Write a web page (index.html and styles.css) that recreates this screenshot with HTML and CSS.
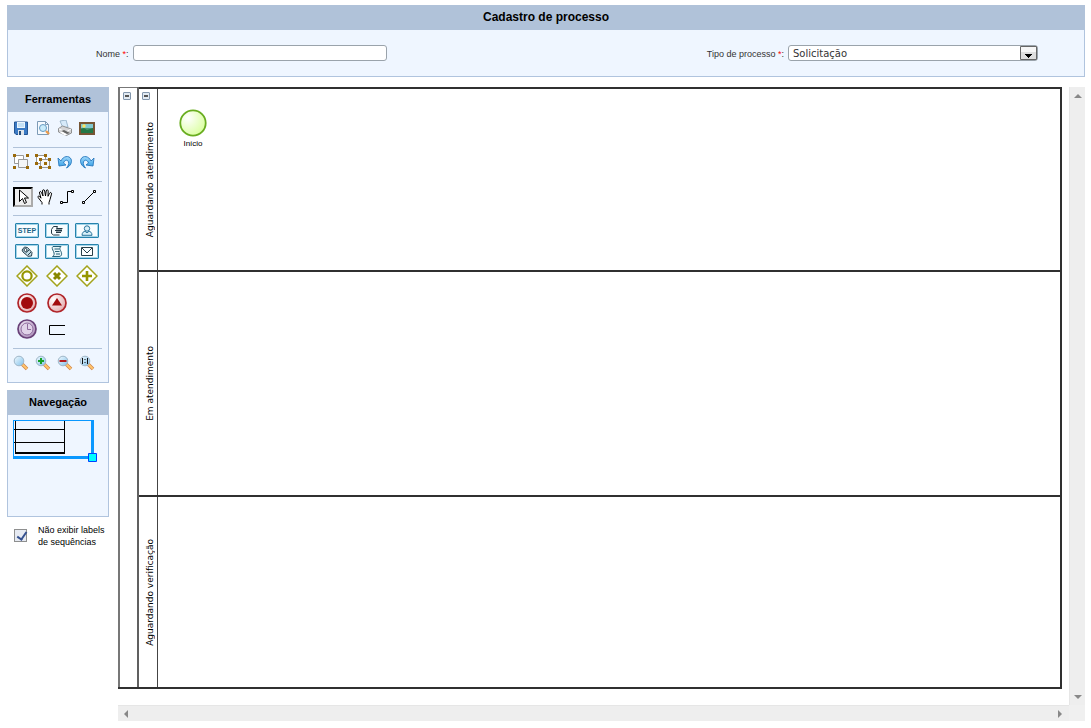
FILE: index.html
```html
<!DOCTYPE html>
<html lang="pt-BR">
<head>
<meta charset="utf-8">
<title>Cadastro de processo</title>
<link rel="stylesheet" href="styles.css">
</head>
<body>
<svg class="defs" aria-hidden="true">
  <defs>
    <linearGradient id="glass" x1="0" y1="0" x2="1" y2="1"><stop offset="0" stop-color="#f4fbff"/><stop offset="1" stop-color="#7fc0ea"/></linearGradient>
    <linearGradient id="arrow" x1="0" y1="0" x2="0" y2="1"><stop offset="0" stop-color="#9fd8fb"/><stop offset="1" stop-color="#2a9ae4"/></linearGradient>
    <radialGradient id="green" cx=".3" cy=".3" r=".8"><stop offset="0" stop-color="#fff"/><stop offset="1" stop-color="#d9ff9c"/></radialGradient>
    <radialGradient id="red" cx=".3" cy=".3" r=".8"><stop offset="0" stop-color="#fff"/><stop offset="1" stop-color="#e2a9ac"/></radialGradient>
    <radialGradient id="purple" cx=".35" cy=".3" r=".8"><stop offset="0" stop-color="#efe6f4"/><stop offset="1" stop-color="#a98bb8"/></radialGradient>
    <symbol id="lens" viewBox="0 0 16 16">
      <path d="M9 9l5 5" stroke="#d0854a" stroke-width="3.6"/><path d="M9.500 9.500l4.300 4.300" stroke="#ffc56b" stroke-width="2"/>
      <circle cx="6" cy="6" r="4.800" fill="url(#glass)" stroke="#9fb6c8"/>
    </symbol>
  </defs>
</svg>

<section class="panel">
  <h1 class="panel-title page-title">Cadastro de processo</h1>
  <form class="form">
    <div class="field">
      <label for="nome">Nome <span class="required">*</span>:</label>
      <input class="control" id="nome" type="text">
    </div>
    <div class="field">
      <label for="tipo">Tipo de processo <span class="required">*</span>:</label>
      <span class="select-wrap">
        <select class="control select" id="tipo"><option>Solicitação</option></select>
        <svg class="select-arrow" viewBox="0 0 17 14" aria-hidden="true"><path d="M.5.5h16v13H.5z" fill="#dedede" stroke="#666"/><path d="M1 1h15v5H1z" fill="#f6f6f6"/><path d="M5 8h7v1h-1v1h-1v1H9v1H8v-1H7v-1H6V9H5z" fill="#000"/></svg>
      </span>
    </div>
  </form>
</section>

<main class="workspace">
  <aside class="sidebar">
    <section class="panel">
      <h2 class="panel-title">Ferramentas</h2>
      <div class="tools">
        <div class="row row-file">
          <button class="tool" aria-label="Salvar"><svg viewBox="0 0 16 16"><path d="M1.500 2h13v12.500H3L1.500 13z" fill="#3b7ac4" stroke="#245593"/><path d="M4 2h8v6H4z" fill="#eaf5fd"/><path d="M5 10h6v5H5z" fill="#dfe5ea"/><path d="M6 11h2v4H6z" fill="#264e7d"/><path d="M5 4h6M5 6h6" stroke="#9ecbed"/></svg></button>
          <button class="tool" aria-label="Visualizar impressão"><svg viewBox="0 0 16 16"><path d="M2.500 1.500h8l3 3v10h-11z" fill="#f5faff" stroke="#7d9bb6"/><path d="M10.500 1.500v3h3" fill="none" stroke="#7d9bb6"/><path d="M11 11l3 3" stroke="#e99a4c" stroke-width="2.4"/><circle cx="8" cy="8" r="3.500" fill="#c9ecfb" stroke="#669bc2"/></svg></button>
          <button class="tool" aria-label="Imprimir"><svg viewBox="0 0 16 16"><path d="M3 1l6-1 2 7-5 1z" fill="#d7eafa" stroke="#8caac2" stroke-width=".8"/><path d="M1.500 8.500l4-2.500 9 3v4l-5 2.500-8-3.500z" fill="#d5d5d7" stroke="#888" stroke-width=".9"/><path d="M2 9l7 3 5-3" fill="none" stroke="#fff"/><path d="M4 11l6 3 3-1-6-3z" fill="#666"/><path d="M3 12.500l5 3 2-1-5-3z" fill="#fff"/></svg></button>
          <button class="tool" aria-label="Imagem"><svg viewBox="0 0 16 16"><path d="M1 3h14v11H1z" fill="#4d9476" stroke="#765534" stroke-width="2"/><path d="M2 4h12v4H2z" fill="#81c8cf"/><path d="M2 9l3-1 3 2 6-2v5H2z" fill="#237746"/><circle cx="5" cy="6" r="1.700" fill="#ffe55c"/></svg></button>
        </div>
        <div class="row row-edit">
          <button class="tool" aria-label="Agrupar"><svg viewBox="0 0 16 16"><path d="M1.500 1.500h9v8h-9z" fill="#fff" stroke="#999"/><path d="M5.500 5.500h9v8h-9z" fill="#f4f6f8" stroke="#999"/><path d="M0 0h3v3H0zM13 0h3v3h-3zM0 12h3v3H0zM13 12h3v3h-3z" fill="#9b6a0a"/></svg></button>
          <button class="tool" aria-label="Desagrupar"><svg viewBox="0 0 16 16"><path d="M1.500 1.500h9v8h-9z" fill="#fff" stroke="#999"/><path d="M5.500 5.500h9v8h-9z" fill="#f4f6f8" stroke="#999"/><path d="M0 0h3v3H0zM9 0h3v3H9zM0 8h3v3H0zM9 8h3v3H9zM4 4h3v3H4zM13 4h3v3h-3zM4 12h3v3H4zM13 12h3v3h-3z" fill="#9b6a0a"/></svg></button>
          <button class="tool" aria-label="Desfazer"><svg viewBox="0 0 16 16"><path d="M1 4l1 8 7-1-2.500-2c1-3 4-4 5-1 .6 2-.5 4-2 6 4-2 6-6 4.500-9-2-4-8-3-10 2z" fill="url(#arrow)" stroke="#2878bd" stroke-width=".9"/></svg></button>
          <button class="tool" aria-label="Refazer"><svg viewBox="0 0 16 16"><path d="M15 4l-1 8-7-1 2.500-2c-1-3-4-4-5-1-.6 2 .5 4 2 6-4-2-6-6-4.500-9 2-4 8-3 10 2z" fill="url(#arrow)" stroke="#2878bd" stroke-width=".9"/></svg></button>
        </div>
        <div class="row row-mode">
          <button class="mode mode-active" aria-label="Selecionar"><svg viewBox="0 0 16 16"><path d="M4.500 1v11.500l3-3 2 5 2-1-2-4.500h4z" fill="#fff" stroke="#000"/></svg></button>
          <button class="mode" aria-label="Mover"><svg viewBox="0 0 16 16"><path d="M5 15.500v-2L1.500 9C0 7 2 6.500 3 8l1 1.200L2.500 4c-.4-1.700 1.500-2 2-.5L6 7 5.500 2c0-1.700 2-1.700 2.200 0L8.500 7l.7-5c.2-1.700 2.200-1.500 2 .2L11 7.300l1.500-3c.8-1.500 2.500-.6 2 .8L13 10.500l-1 3v2" fill="#fff" stroke="#000"/></svg></button>
          <button class="mode" aria-label="Conector em ângulo"><svg viewBox="0 0 16 16"><path d="M3 13.500h5.500v-11H13" fill="none" stroke="#000"/><path d="M1.500 12.500h2v2h-2zM12.500 1.500h2v2h-2z" fill="#fff" stroke="#000"/></svg></button>
          <button class="mode" aria-label="Conector reto"><svg viewBox="0 0 16 16"><path d="M3 13L13 3" stroke="#000"/><path d="M1.500 12.500h2v2h-2zM12.500 1.500h2v2h-2z" fill="#fff" stroke="#000"/></svg></button>
        </div>
        <div class="palette">
          <button class="shape task step" aria-label="Step">STEP</button>
          <button class="shape task" aria-label="Tarefa manual"><svg viewBox="0 0 20 11"><path d="M4.500 4.500l2-3h4l-1 2h6M4.500 4.500v4l2 1.500h6M8 5.500h7M9 7.500h5" fill="none" stroke="#253944"/><path d="M9 4h6v3H9z" fill="#253944" opacity=".5"/></svg></button>
          <button class="shape task" aria-label="Tarefa de usuário"><svg viewBox="0 0 20 11"><path d="M5 10.300c0-3 2-4 3-4l2 1.500 2-1.500c1 0 3 1 3 4z" fill="#d9f0f9" stroke="#27739b"/><circle cx="10" cy="3.500" r="2.700" fill="#d9f0f9" stroke="#27739b"/></svg></button>
          <button class="shape task" aria-label="Anexo"><svg viewBox="0 0 20 11"><path d="M5 4l2.500-3 3 .5L15 6.500 14.500 10l-3.500.3L6 6z" fill="#c2dce5" stroke="#29414e"/><circle cx="8.500" cy="4" r="1.500" fill="#fff" stroke="#29414e"/><path d="M8.500 7L12 4M11 9l3-3" stroke="#29414e"/></svg></button>
          <button class="shape task" aria-label="Script"><svg viewBox="0 0 20 11"><path d="M6 .5h8c-2 2-1 3 0 5s1 5-2 5H5.500c2-1 2-3 1-5s-2-4-.5-5z" fill="#e6f5f8" stroke="#286178"/><path d="M7.500 3h5M8 5.500h4.500M9 8h4" stroke="#286178"/></svg></button>
          <button class="shape task" aria-label="Mensagem"><svg viewBox="0 0 20 11"><path d="M4.500 1.500h11v8h-11zM5 2l5 5 5-5" fill="#fff" stroke="#293f49"/></svg></button>
          <button class="shape gateway" aria-label="Decisão inclusiva"><svg viewBox="0 0 22 22"><path d="M11 1l10 10-10 10L1 11z" fill="#fff" stroke="#a3a31b" stroke-width="1.500"/><circle cx="11" cy="11" r="4.600" fill="none" stroke="#969600" stroke-width="2.200"/></svg></button>
          <button class="shape gateway" aria-label="Decisão exclusiva"><svg viewBox="0 0 22 22"><path d="M11 1l10 10-10 10L1 11z" fill="#fff" stroke="#a3a31b" stroke-width="1.500"/><path d="M8 8l6 6M14 8l-6 6" stroke="#888800" stroke-width="3"/></svg></button>
          <button class="shape gateway" aria-label="Decisão paralela"><svg viewBox="0 0 22 22"><path d="M11 1l10 10-10 10L1 11z" fill="#fff" stroke="#a3a31b" stroke-width="1.500"/><path d="M11 6v10M6 11h10" stroke="#969600" stroke-width="2.600"/></svg></button>
          <button class="shape event" aria-label="Fim"><svg viewBox="0 0 20 20"><circle cx="10" cy="10" r="9" fill="url(#red)" stroke="#b02429" stroke-width="1.700"/><circle cx="10" cy="10" r="6" fill="#a20b0d"/></svg></button>
          <button class="shape event" aria-label="Sinal"><svg viewBox="0 0 20 20"><circle cx="10" cy="10" r="9" fill="url(#red)" stroke="#b02429" stroke-width="1.700"/><path d="M10 5l5 7.500H5z" fill="#a20b0d"/></svg></button>
          <button class="shape event timer" aria-label="Temporizador"><svg viewBox="0 0 20 20"><circle cx="10" cy="10" r="9" fill="url(#purple)" stroke="#694178" stroke-width="1.700"/><circle cx="10" cy="10" r="6" fill="#e0d2e8" stroke="#8d6a9c"/><path d="M10.500 5v5.500H14" fill="none" stroke="#8d6a9c"/></svg></button>
          <button class="shape event" aria-label="Anotação"><svg viewBox="0 0 20 20"><path d="M18 6.500H2.500v9H18" fill="none" stroke="#000"/></svg></button>
        </div>
        <div class="row row-zoom">
          <button class="tool" aria-label="Zoom"><svg viewBox="0 0 16 16"><use href="#lens"/></svg></button>
          <button class="tool" aria-label="Aumentar zoom"><svg viewBox="0 0 16 16"><use href="#lens"/><path d="M6 3v6M3 6h6" stroke="#16a22a" stroke-width="2"/></svg></button>
          <button class="tool" aria-label="Diminuir zoom"><svg viewBox="0 0 16 16"><use href="#lens"/><path d="M2.500 6h7" stroke="#b51d20" stroke-width="2"/></svg></button>
          <button class="tool" aria-label="Tamanho real"><svg viewBox="0 0 16 16"><use href="#lens"/><path d="M3.500 3v6M8.500 3v6M6 4v1M6 7v1" stroke="#111"/></svg></button>
        </div>
      </div>
    </section>

    <section class="panel">
      <h2 class="panel-title">Navegação</h2>
      <div class="navigator">
        <svg class="overview" viewBox="0 0 84 42" aria-hidden="true">
          <path d="M0 0h80v38H0z" fill="#eff6ff"/>
          <path d="M.5 0v38M0 .5h81" stroke="#0a98ff"/><path d="M79.500 0v38M0 37.500h80" stroke="#0a98ff" stroke-width="3"/>
          <path d="M2.500 1v33M51.500 1v33M1 9.500h51M1 22.500h51" fill="none" stroke="#000"/><path d="M2 33h50" stroke="#000" stroke-width="2"/>
          <path d="M75.500 33.500h8v8h-8z" fill="#00ffff" stroke="#0040ff"/>
        </svg>
      </div>
    </section>

    <label class="option"><input class="check" type="checkbox" checked><span>Não exibir labels de sequências</span></label>
  </aside>

  <div class="viewport">
    <div class="canvas">
      <div class="pool">
        <div class="pool-head"><button class="collapse" aria-label="Recolher processo"></button></div>
        <div class="lanes">
          <section class="lane lane-waiting">
            <div class="lane-head"><button class="collapse" aria-label="Recolher raia"></button><span class="lane-name">Aguardando atendimento</span></div>
            <div class="lane-body">
              <div class="node"><svg viewBox="0 0 28 28" aria-hidden="true"><circle cx="14" cy="14" r="12.700" fill="url(#green)" stroke="#69ad20" stroke-width="1.800"/></svg><span>Início</span></div>
            </div>
          </section>
          <section class="lane lane-service">
            <div class="lane-head"><span class="lane-name">Em atendimento</span></div>
            <div class="lane-body"></div>
          </section>
          <section class="lane lane-check">
            <div class="lane-head"><span class="lane-name">Aguardando verificação</span></div>
            <div class="lane-body"></div>
          </section>
        </div>
      </div>
    </div>
    <div class="scroll scroll-y"><svg viewBox="0 0 16 16"><path d="M4 11l4-4 4 4z"/></svg><svg viewBox="0 0 16 16"><path d="M4 6l4 4 4-4z"/></svg></div>
    <div class="scroll scroll-x"><svg viewBox="0 0 16 16"><path d="M10 4L6 8l4 4z"/></svg><svg viewBox="0 0 16 16"><path d="M5 4l4 4-4 4z"/></svg></div>
    <div class="scroll-corner"></div>
  </div>
</main>
</body>
</html>
```

FILE: styles.css
```css
* { box-sizing: border-box; }

body {
  margin: 5px 6px 6px 7px;
  background: #fff;
  color: #000;
  font: 9px/12px "Liberation Sans", Arial, sans-serif;
}

button { margin: 0; padding: 0; border: 0; background: none; color: inherit; font: inherit; }
svg { display: block; }
.defs { position: absolute; width: 0; height: 0; }

.panel { border: 1px solid #b0c4de; background: #eff6ff; }
.panel-title {
  margin: -1px -1px 0;
  height: 25px;
  background: #b0c2d9;
  font-size: 11px;
  line-height: 25px;
  font-weight: bold;
  text-align: center;
}
.page-title { font-size: 12px; }

.form {
  display: flex;
  justify-content: space-between;
  padding: 15px 46px 15px 88px;
}
.field { display: flex; align-items: center; gap: 4px; color: #333; }
.field label { padding-top: 2px; }
.required { color: #f00; }
.control {
  width: 254px;
  height: 16px;
  padding: 1px 4px 0;
  border: 1px solid #9aa3ab;
  border-radius: 3px;
  background: #fff;
  color: #333;
  font: 10px/13px "DejaVu Sans", Verdana, sans-serif;
}
.select-wrap { position: relative; display: flex; }
.select { width: 250px; appearance: none; }
.select-arrow { position: absolute; top: 1px; right: 1px; width: 17px; height: 14px; pointer-events: none; }

.workspace { display: flex; gap: 9px; margin-top: 10px; }
.sidebar { display: flex; flex: none; flex-direction: column; gap: 7px; width: 102px; }

.tools { padding: 0 6px 0 5px; }
.row { display: flex; }
.row-file, .row-edit, .row-mode, .palette { border-bottom: 1px solid #b0c2d9; }
.row-file { gap: 6px; padding: 8px 0 11px; }
.row-edit { gap: 6px; padding: 6px 0 11px; }
.row-mode { gap: 2px; padding: 5px 0 8px; }
.row-zoom { gap: 6px; padding: 6px 0 11px; }
.tool, .tool svg { width: 16px; height: 16px; }
.mode { width: 20px; height: 20px; border: 2px solid transparent; }
.mode svg { width: 16px; height: 16px; }
.mode-active { border-color: #000 #aaa #aaa #000; background: #eee; }

.palette {
  display: grid;
  grid-template-columns: 28px 28px 28px;
  grid-template-rows: 15px 15px 22px 20px 20px;
  gap: 6px 2px;
  place-items: center;
  padding: 7px 0 9px;
}
.task {
  width: 24px;
  height: 15px;
  padding: 1px;
  border: 1px solid #2683ad;
  border-radius: 1px;
  background: #f8fdff;
  box-shadow: inset 0 0 0 1px #a4d4e8;
}
.task svg { width: 20px; height: 11px; }
.step { color: #1b6385; font-size: 7px; line-height: 11px; font-weight: bold; }
.gateway svg { width: 22px; height: 22px; }
.event svg { width: 20px; height: 20px; }
.timer { grid-column: 1; }

.navigator { min-height: 101px; padding: 5px; }
.overview { width: 84px; height: 42px; }

.option { display: flex; gap: 11px; padding: 0 0 0 7px; }
.check { flex: none; width: 13px; height: 13px; margin: 5px 0 0; appearance: none; border: 1px solid #8e8f8f; background: #e6eaf2; }
.check:checked::before {
  content: "";
  display: block;
  width: 4px;
  height: 8px;
  margin: 0 0 0 4px;
  border: solid #34508f;
  border-width: 0 2px 2px 0;
  transform: rotate(35deg);
}

.viewport {
  display: grid;
  flex: 1;
  grid-template-columns: 1fr 16px;
  grid-template-rows: auto 16px;
}
.canvas { padding: 0 7px 16px 0; }
.pool { display: flex; border: solid #303030; border-width: 0 2px 2px 0; }
.pool-head { width: 19px; padding: 4px 3px; border: solid #777; border-width: 1px 0 0 2px; }
.lanes { flex: 1; border-left: 2px solid #606060; }
.lane { display: flex; border-top: 2px solid #303030; }
.lane-waiting { min-height: 183px; }
.lane-service { min-height: 225px; }
.lane-check { min-height: 192px; }
.lane-head {
  position: relative;
  display: flex;
  align-items: center;
  justify-content: center;
  width: 19px;
  padding-left: 4px;
  border-right: 1px solid #444;
}
.lane-name {
  writing-mode: vertical-rl;
  transform: rotate(180deg);
  font: 9px/12px "DejaVu Sans", Verdana, sans-serif;
  white-space: nowrap;
}
.lane-body { position: relative; flex: 1; }
.collapse {
  display: flex;
  align-items: center;
  justify-content: center;
  width: 8px;
  height: 8px;
  border: 1px solid #8296ac;
  border-radius: 1px;
  background: #e2eaf2;
}
.collapse::before { content: ""; width: 4px; height: 2px; background: #555; }
.lane-head .collapse { position: absolute; top: 3px; left: 3px; }
.node { position: absolute; top: 20px; left: 21px; width: 28px; font-size: 8px; line-height: 14px; text-align: center; }
.node svg { width: 28px; height: 28px; }

.scroll { display: flex; justify-content: space-between; background: #eee; }
.scroll svg { width: 16px; height: 16px; fill: #888; }
.scroll-y { flex-direction: column; border-left: 1px solid #e6e6e6; }
.scroll-x { border-top: 1px solid #e6e6e6; }
.scroll-corner { background: #f0f0f0; }
```
